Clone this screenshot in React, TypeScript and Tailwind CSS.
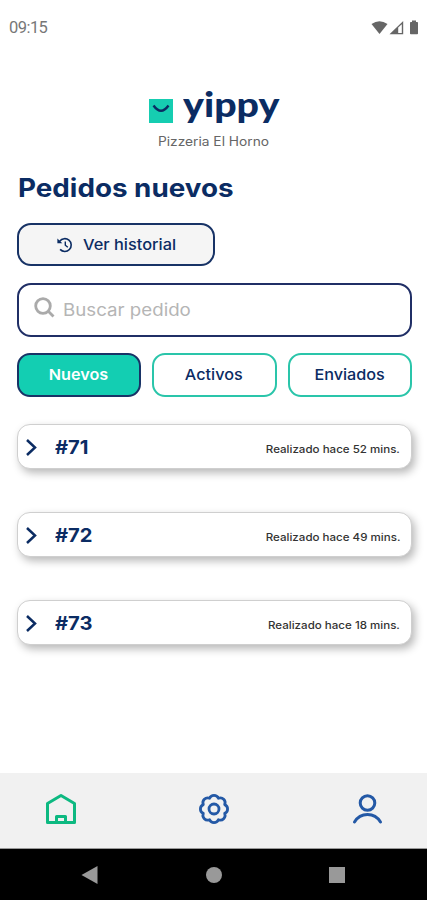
import { clsx } from 'clsx';

interface Order {
  id: number;
  minutes: number;
}

const orders: Order[] = [
  { id: 71, minutes: 52 },
  { id: 72, minutes: 49 },
  { id: 73, minutes: 18 },
];

const tabs = ['Nuevos', 'Activos', 'Enviados'];

// Android status bar: clock, wifi, signal, battery
function StatusBar() {
  return (
    <div className="flex h-[56px] items-center justify-between pl-[9px] pr-[7px] text-[#666666]">
      <span className="font-['Roboto',sans-serif] text-[16.5px] leading-none tracking-[-0.55px] text-[#777777]">09:15</span>
      <svg width="50" height="16" viewBox="0 0 50 16" fill="currentColor" className="-mt-px">
        <path d="M1.5 4 Q9.5 -1.6 17.5 4 L9.5 14 Z" />
        <path d="M19.5 14.2 L33.2 1 V14.2 Z M28.2 7.6 V13 H31.8 V4.3 Z" fillRule="evenodd" />
        <path d="M42 0.5 h4 v1.5 h1.2 q0.8 0 0.8 0.8 v10.6 q0 0.8 -0.8 0.8 h-6.4 q-0.8 0 -0.8 -0.8 v-10.6 q0 -0.8 0.8 -0.8 h1.2 z" />
      </svg>
    </div>
  );
}

function Brand() {
  return (
    <header className="flex h-[95px] flex-col items-center pt-[32px]">
      <div className="flex h-[38px] w-[131px] items-start pl-px">
        <svg width="24" height="24" viewBox="0 0 24 24" className="mt-[11px] shrink-0">
          <path d="M0 0 H24 V24 H0 Z" fill="#16cdb1" />
          <path d="M4.5 6.5 Q12 17 19.5 6.5" fill="none" stroke="#0b2c63" strokeWidth="2.4" />
        </svg>
        <span className="ml-[10px] origin-left scale-x-[1.14] font-['Lato',sans-serif] text-[34.5px] leading-[32px] font-black text-[#0b2c63]">
          yippy
        </span>
      </div>
      <p className="mt-[7px] text-[12.5px] leading-[18px]">
        <span className="inline-block scale-x-[1.1] text-[#666666]">Pizzeria El Horno</span>
      </p>
    </header>
  );
}

function HistoryIcon() {
  return (
    <svg width="16" height="16" viewBox="0 0 16 16" fill="none" stroke="currentColor" strokeWidth="1.6">
      <path d="M2.7 4.2 A6.4 6.4 0 1 1 3.1 12.4" />
      <path d="M8.3 4.4 V8.2 L10.8 10.3" strokeWidth="1.4" />
      <path d="M0.4 1.4 V6.3 H5.3 Z" fill="currentColor" stroke="none" />
    </svg>
  );
}

function OrderCard({ order }: { order: Order }) {
  return (
    <div className="flex h-[45px] items-center rounded-[13px] border border-[#cfcfcf] bg-white pl-[8px] pr-[11px] shadow-[3px_4px_9px_rgba(0,0,0,0.28)]">
      <svg width="11" height="17" viewBox="0 0 11 17" fill="none" stroke="#0b2c63" strokeWidth="2.5" className="mt-[2px]">
        <path d="M1 1 L9 8.5 L1 16" />
      </svg>
      <span className="mt-[2px] ml-[18px] origin-left scale-x-[1.09] text-[18.5px] font-bold text-[#0b2c63]">#{order.id}</span>
      <span className="mt-[6px] ml-auto origin-right scale-x-[1.1] text-[10.5px] font-medium text-[#333333]">
        Realizado hace {order.minutes} mins.
      </span>
    </div>
  );
}

function BottomNav() {
  return (
    <nav className="flex h-[76px] items-center justify-between border-b border-[#999999] bg-[#f1f1f1] px-[45px]">
      <svg width="32" height="32" viewBox="0 0 32 32" fill="none" stroke="#0db981" strokeWidth="3" strokeLinejoin="round" className="mt-[-3px]">
        <path d="M2.5 10.5 L16 2.5 L29.5 10.5 V29.5 H2.5 Z" />
        <path d="M11.5 29 V23.5 H20.5 V29" />
      </svg>
      <svg width="32" height="32" viewBox="0 0 32 32" fill="none" stroke="#2459a6" strokeWidth="2.8" strokeLinejoin="round" className="mt-[-3px] ml-[-2px]">
        <path d="M11.6 5.3 A4.8 4.8 0 0 1 20.4 5.3 A4.8 4.8 0 0 1 26.7 11.6 A4.8 4.8 0 0 1 26.7 20.4 A4.8 4.8 0 0 1 20.4 26.7 A4.8 4.8 0 0 1 11.6 26.7 A4.8 4.8 0 0 1 5.3 20.4 A4.8 4.8 0 0 1 5.3 11.6 A4.8 4.8 0 0 1 11.6 5.3 Z" />
        <circle cx="16" cy="16" r="5" />
      </svg>
      <svg width="32" height="32" viewBox="0 0 32 32" fill="none" stroke="#2459a6" strokeWidth="3" strokeLinecap="round" className="mt-[-3px] mr-[-2px]">
        <circle cx="15.5" cy="10" r="7.3" />
        <path d="M2.5 29 Q7 21.5 15.5 21.5 Q24 21.5 28.5 29" />
      </svg>
    </nav>
  );
}

function SystemNav() {
  return (
    <div className="flex h-[51px] items-center justify-between bg-black pr-[82px] pl-[81px]">
      <svg width="17" height="20" viewBox="0 0 17 20" fill="#999999">
        <path d="M0.5 10 L16.5 1 V19 Z" />
      </svg>
      <span className="size-[16px] rounded-full bg-[#999999]" />
      <span className="size-[16px] bg-[#999999]" />
    </div>
  );
}

export default function App() {
  return (
    <div className="flex h-[900px] w-[427px] flex-col overflow-hidden bg-white font-['Inter',sans-serif] text-[#0b2c63]">
      <StatusBar />
      <Brand />

      <main className="flex flex-1 flex-col items-start pr-[15px] pl-[16.5px]">
        <h1 className="mt-[20px] h-[33px] pl-px text-[25.5px] leading-[33px] font-bold whitespace-nowrap">
          <span className="inline-block origin-left scale-x-[1.09]">Pedidos nuevos</span>
        </h1>

        <button className="mt-[19px] flex h-[43px] w-[198px] items-center gap-[10px] rounded-[14px] border-2 border-[#183366] bg-[#f5f5f5] pl-[38px] text-[15px] font-medium">
          <HistoryIcon />
          <span className="mt-px origin-left scale-x-[1.09]">Ver historial</span>
        </button>

        <div className="mt-[17px] flex h-[54px] w-full items-center rounded-[14px] border-2 border-[#202f66] pl-[15px]">
          <svg width="21" height="21" viewBox="0 0 21 21" fill="none" stroke="#aaaaaa" strokeWidth="2.8" className="mt-[-5px]">
            <circle cx="9" cy="9" r="7.3" />
            <path d="M14.3 14.3 L19.5 19.5" />
          </svg>
          <span className="mt-px ml-[8px] origin-left scale-x-[1.1] text-[17px] text-[#b5b5b5]">Buscar pedido</span>
        </div>

        <div className="mt-[16px] grid w-full grid-cols-3 gap-[11px]">
          {tabs.map((tab, index) => (
            <button
              key={tab}
              className={clsx(
                'h-[44px] rounded-[13px] border-2 text-[15px]',
                index === 0
                  ? 'border-[#183366] bg-[#13ceb2] font-semibold text-white'
                  : 'border-[#2ac5aa] bg-white font-medium',
              )}
            >
              <span className="inline-block scale-x-[1.08]">{tab}</span>
            </button>
          ))}
        </div>

        {/* Order list */}
        <div className="mt-[27px] flex w-full flex-col gap-[43px]">
          {orders.map((order) => (
            <OrderCard key={order.id} order={order} />
          ))}
        </div>
      </main>

      <BottomNav />
      <SystemNav />
    </div>
  );
}
